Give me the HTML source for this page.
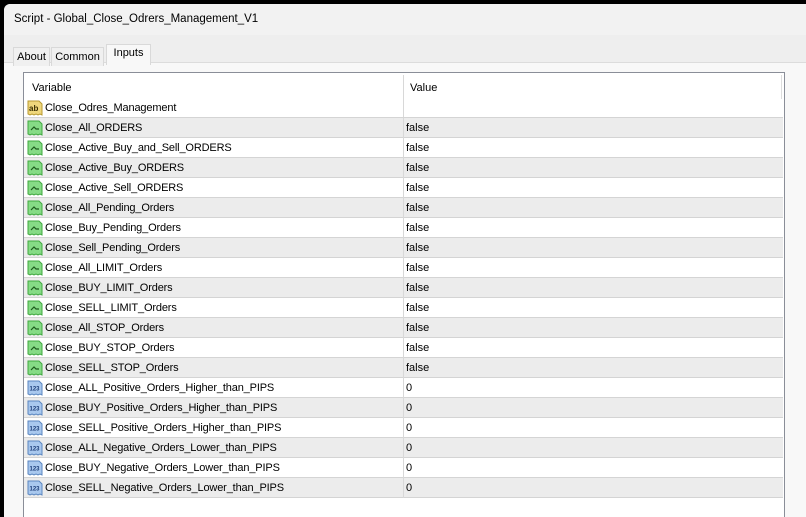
<!DOCTYPE html><html style="overflow:hidden;height:517px"><head><style>
body{margin:0;width:806px;height:517px;background:#000;overflow:hidden;font-family:"Liberation Sans",sans-serif;font-size:11px;color:#000;position:relative}
.win{position:absolute;left:4px;top:4px;width:802px;height:513px;background:#f8f8f8;border-top-left-radius:6px;overflow:hidden}
.title{position:absolute;left:0;top:0;right:0;height:31px;background:#f2f2f2;border-top-left-radius:6px}
.title span{position:absolute;left:10px;top:9px;font-size:11.5px}
.tabs{position:absolute;left:0;top:31px;right:0;height:27px;background:#eeeeee;border-bottom:1px solid #dcdcdc}
.tab{position:absolute;top:12px;height:15px;border:1px solid #d9d9d9;border-bottom:none;background:#f0f0f0;font-size:11px;padding-top:3px;text-align:center}
.tab.a{top:9px;height:18px;background:#f8f8f8;padding-top:2px}
.tbl{position:absolute;left:19px;top:68px;width:760px;height:460px;background:#fff;border:1px solid #8a8e98}
.vl{position:absolute;left:379px;top:2px;width:1px;height:45px;background:#d8d8d8}
.sb{position:absolute;left:757px;top:2px;width:1px;height:24px;background:#ddd}
.hdr{position:absolute;top:9px}
.row{position:absolute;left:0;width:759px;height:19px;border-bottom:1px solid #d4d4d4}
.g{background:#ececec}
.n{position:absolute;left:21px;top:4px;letter-spacing:-0.15px}
.v{position:absolute;left:382px;top:4px}
.vs{position:absolute;left:379px;top:0;width:1px;height:20px;background:#d8d8d8}
.ic{position:absolute;left:3px;top:2px;width:16px;height:16px}
</style></head><body>
<svg width="0" height="0" style="position:absolute">
<defs>
<symbol id="b" viewBox="0 0 16 16"><path d="M1 1h11l3 3v11l-2-1-2 1-2-1-2 1-2-1-2 1-2-1z" fill="#86db86" stroke="#3fa83f"/><path d="M4 10l3-3 2 2h3" fill="none" stroke="#1d5a1d" stroke-width="1.2"/></symbol>
<symbol id="n" viewBox="0 0 16 16"><path d="M1 1h11l3 3v11l-2-1-2 1-2-1-2 1-2-1-2 1-2-1z" fill="#a9c8ee" stroke="#5a86c0"/><text x="2.5" y="10.5" font-size="6" font-family="Liberation Sans" fill="#1c3d78" font-weight="bold">123</text></symbol>
<symbol id="s" viewBox="0 0 16 16"><path d="M1 1h11l3 3v11l-2-1-2 1-2-1-2 1-2-1-2 1-2-1z" fill="#efd77c" stroke="#b89a30"/><text x="2" y="11" font-size="8" font-family="Liberation Sans" fill="#3a2e00" font-weight="bold">ab</text></symbol>
</defs></svg>
<div class="win">
<div class="title"><span>Script - Global_Close_Odrers_Management_V1</span></div>
<div class="tabs">
<div class="tab" style="left:9px;width:35px">About</div>
<div class="tab" style="left:47px;width:51px">Common</div>
<div class="tab a" style="left:102px;width:43px">Inputs</div>
</div>
<div class="tbl">
<div class="vl"></div><div class="sb"></div>
<div class="hdr" style="left:8px">Variable</div>
<div class="hdr" style="left:386px">Value</div>
<div class="row" style="top:25px"><svg class="ic"><use href="#s"/></svg><span class="n">Close_Odres_Management</span></div>
<div class="row g" style="top:45px"><svg class="ic"><use href="#b"/></svg><span class="n">Close_All_ORDERS</span><i class="vs"></i><span class="v">false</span></div>
<div class="row" style="top:65px"><svg class="ic"><use href="#b"/></svg><span class="n">Close_Active_Buy_and_Sell_ORDERS</span><i class="vs"></i><span class="v">false</span></div>
<div class="row g" style="top:85px"><svg class="ic"><use href="#b"/></svg><span class="n">Close_Active_Buy_ORDERS</span><i class="vs"></i><span class="v">false</span></div>
<div class="row" style="top:105px"><svg class="ic"><use href="#b"/></svg><span class="n">Close_Active_Sell_ORDERS</span><i class="vs"></i><span class="v">false</span></div>
<div class="row g" style="top:125px"><svg class="ic"><use href="#b"/></svg><span class="n">Close_All_Pending_Orders</span><i class="vs"></i><span class="v">false</span></div>
<div class="row" style="top:145px"><svg class="ic"><use href="#b"/></svg><span class="n">Close_Buy_Pending_Orders</span><i class="vs"></i><span class="v">false</span></div>
<div class="row g" style="top:165px"><svg class="ic"><use href="#b"/></svg><span class="n">Close_Sell_Pending_Orders</span><i class="vs"></i><span class="v">false</span></div>
<div class="row" style="top:185px"><svg class="ic"><use href="#b"/></svg><span class="n">Close_All_LIMIT_Orders</span><i class="vs"></i><span class="v">false</span></div>
<div class="row g" style="top:205px"><svg class="ic"><use href="#b"/></svg><span class="n">Close_BUY_LIMIT_Orders</span><i class="vs"></i><span class="v">false</span></div>
<div class="row" style="top:225px"><svg class="ic"><use href="#b"/></svg><span class="n">Close_SELL_LIMIT_Orders</span><i class="vs"></i><span class="v">false</span></div>
<div class="row g" style="top:245px"><svg class="ic"><use href="#b"/></svg><span class="n">Close_All_STOP_Orders</span><i class="vs"></i><span class="v">false</span></div>
<div class="row" style="top:265px"><svg class="ic"><use href="#b"/></svg><span class="n">Close_BUY_STOP_Orders</span><i class="vs"></i><span class="v">false</span></div>
<div class="row g" style="top:285px"><svg class="ic"><use href="#b"/></svg><span class="n">Close_SELL_STOP_Orders</span><i class="vs"></i><span class="v">false</span></div>
<div class="row" style="top:305px"><svg class="ic"><use href="#n"/></svg><span class="n">Close_ALL_Positive_Orders_Higher_than_PIPS</span><i class="vs"></i><span class="v">0</span></div>
<div class="row g" style="top:325px"><svg class="ic"><use href="#n"/></svg><span class="n">Close_BUY_Positive_Orders_Higher_than_PIPS</span><i class="vs"></i><span class="v">0</span></div>
<div class="row" style="top:345px"><svg class="ic"><use href="#n"/></svg><span class="n">Close_SELL_Positive_Orders_Higher_than_PIPS</span><i class="vs"></i><span class="v">0</span></div>
<div class="row g" style="top:365px"><svg class="ic"><use href="#n"/></svg><span class="n">Close_ALL_Negative_Orders_Lower_than_PIPS</span><i class="vs"></i><span class="v">0</span></div>
<div class="row" style="top:385px"><svg class="ic"><use href="#n"/></svg><span class="n">Close_BUY_Negative_Orders_Lower_than_PIPS</span><i class="vs"></i><span class="v">0</span></div>
<div class="row g" style="top:405px"><svg class="ic"><use href="#n"/></svg><span class="n">Close_SELL_Negative_Orders_Lower_than_PIPS</span><i class="vs"></i><span class="v">0</span></div>
</div>
</div>
</body></html>
